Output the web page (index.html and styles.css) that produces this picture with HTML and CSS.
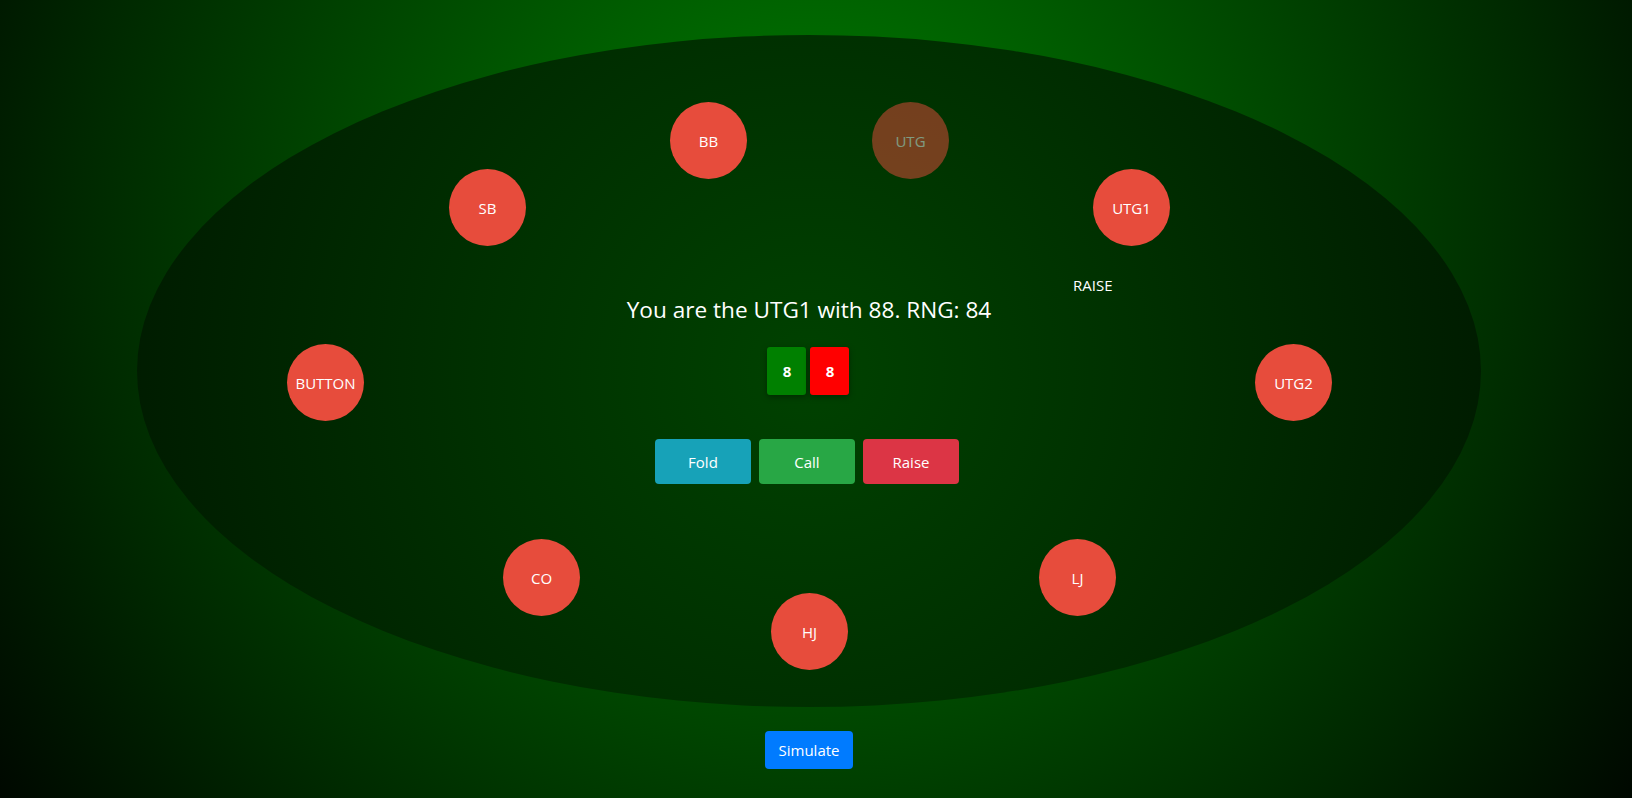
FILE: index.html
```html
<!DOCTYPE html>
<html lang="en">
<head>
<meta charset="utf-8">
<title>Poker Trainer</title>
<link rel="stylesheet" href="styles.css">
</head>
<body>
<div class="page">
  <div class="table">
    <div class="seat seat-bb">BB</div>
    <div class="seat seat-utg seat-dim">UTG</div>
    <div class="seat seat-sb">SB</div>
    <div class="seat seat-utg1">UTG1</div>
    <div class="seat seat-button">BUTTON</div>
    <div class="seat seat-utg2">UTG2</div>
    <div class="seat seat-co">CO</div>
    <div class="seat seat-lj">LJ</div>
    <div class="seat seat-hj">HJ</div>
    <div class="action action-utg1">RAISE</div>

    <div class="center">
      <h2 class="prompt">You are the UTG1 with 88. RNG: 84</h2>
      <div class="hand">
        <div class="card card-green">8</div>
        <div class="card card-red">8</div>
      </div>
      <div class="actions">
        <button class="btn btn-fold">Fold</button>
        <button class="btn btn-call">Call</button>
        <button class="btn btn-raise">Raise</button>
      </div>
    </div>
  </div>
  <div class="footer">
    <button class="btn-sim">Simulate</button>
  </div>
</div>
</body>
</html>
```
FILE: styles.css
```css
* { box-sizing: border-box; }
html, body {
  margin: 0;
  height: 100%;
}
body {
  font-family: "Open Sans", "Noto Sans", sans-serif;
  color: #fff;
  background: radial-gradient(circle farthest-corner at 50% 30%, rgb(0, 128, 0) 0%, rgb(0, 40, 0) 75%, rgb(0, 8, 0) 100%);
  overflow: hidden;
}
.page {
  margin-right: 14px;
  padding-top: 35px;
  display: flex;
  flex-direction: column;
  align-items: center;
}
.table {
  position: relative;
  width: 1344px;
  height: 672px;
  border-radius: 50%;
  background: radial-gradient(circle farthest-corner at 50% 50%, #004200 0%, #003000 45%, #001800 100%);
  display: flex;
  flex-direction: column;
  align-items: center;
}
.seat {
  position: absolute;
  width: 77px;
  height: 77px;
  border-radius: 50%;
  background: #e74c3c;
  display: flex;
  align-items: center;
  justify-content: center;
  font-size: 15px;
  color: #fff;
}
.seat-dim { opacity: 0.5; }
.seat-bb { left: 533px; top: 67px; }
.seat-utg { left: 735px; top: 67px; }
.seat-sb { left: 312px; top: 134px; }
.seat-utg1 { left: 956px; top: 134px; }
.seat-button { left: 150px; top: 309px; }
.seat-utg2 { left: 1118px; top: 309px; }
.seat-co { left: 366px; top: 504px; }
.seat-lj { left: 902px; top: 504px; }
.seat-hj { left: 634px; top: 558px; }

.action {
  position: absolute;
  font-size: 15px;
  line-height: 20px;
}
.action-utg1 { left: 936px; top: 240px; }

.center {
  padding-top: 260px;
  display: flex;
  flex-direction: column;
  align-items: center;
}
.prompt {
  margin: 0;
  font-size: 22.6px;
  font-weight: 400;
  line-height: 30px;
}
.hand {
  margin-top: 22px;
  margin-right: 1px;
  display: flex;
  gap: 4px;
}
.card {
  width: 39px;
  height: 48px;
  border-radius: 3px;
  display: flex;
  align-items: center;
  justify-content: center;
  font-weight: 700;
  font-size: 15px;
  color: #fff;
  box-shadow: 0 2px 6px rgba(0, 0, 0, 0.35);
}
.card-green { background: #008000; }
.card-red { background: #ff0000; }
.actions {
  margin-top: 44px;
  margin-right: 4px;
  display: flex;
  gap: 8px;
}
.btn {
  width: 96px;
  height: 45px;
  border: none;
  border-radius: 4px;
  font-family: inherit;
  font-size: 15px;
  color: #fff;
  cursor: pointer;
}
.btn-fold { background: #17a2b8; }
.btn-call { background: #28a745; }
.btn-raise { background: #dc3545; }
.footer {
  margin-top: 24px;
  display: flex;
  justify-content: center;
}
.btn-sim {
  height: 38px;
  padding: 0 12px;
  width: 88px;
  border: none;
  border-radius: 4px;
  background: #007bff;
  color: #fff;
  font-family: inherit;
  font-size: 15px;
  cursor: pointer;
}
```
